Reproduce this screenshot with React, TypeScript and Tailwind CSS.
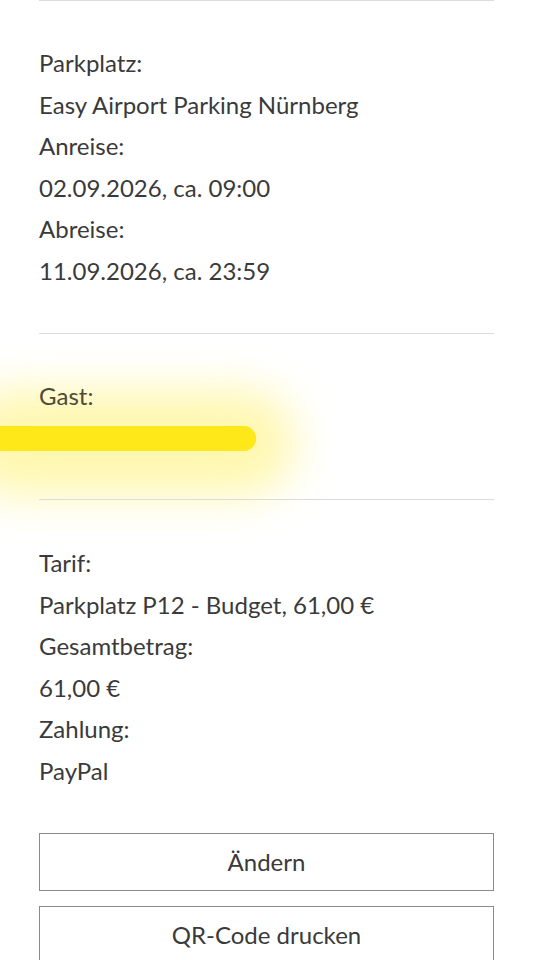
import React from "react";

const Line = ({ children }: { children: React.ReactNode }) => (
  <div className="h-[41.5px] leading-[41.5px]">{children}</div>
);

export default function App() {
  return (
    <div
      className="w-[533px] h-[960px] overflow-hidden bg-white text-[#3a3a3a] text-[24px] relative"
      style={{ fontFamily: "Lato, 'Liberation Sans', sans-serif" }}
    >
      <div className="absolute left-[-40px] top-[390px] w-[335px] h-[105px] rounded-full bg-[#fff59a] opacity-80 blur-[22px] pointer-events-none" />
      <div className="absolute left-0 top-[426px] w-[256px] h-[25px] rounded-r-full bg-[#ffe81a] blur-[0.5px] pointer-events-none" />
      <div className="mx-[39px] w-[455px] relative">
        <div className="border-t border-[#dcdcdc] pt-[41px] pb-[42px]">
          <Line>Parkplatz:</Line>
          <Line>Easy Airport Parking Nürnberg</Line>
          <Line>Anreise:</Line>
          <Line>02.09.2026, ca. 09:00</Line>
          <Line>Abreise:</Line>
          <Line>11.09.2026, ca. 23:59</Line>
        </div>
        <div className="border-t border-[#dcdcdc] pt-[41px] pb-[41px]">
          <Line>
            <span className="text-[#4e4b36]">Gast:</span>
          </Line>
          <Line>
            <span className="opacity-0">Name</span>
          </Line>
        </div>
        <div className="border-t border-[#dcdcdc] pt-[42px] pb-[42px]">
          <Line>Tarif:</Line>
          <Line>Parkplatz P12 - Budget, 61,00 €</Line>
          <Line>Gesamtbetrag:</Line>
          <Line>61,00 €</Line>
          <Line>Zahlung:</Line>
          <Line>PayPal</Line>
        </div>
        <div className="flex flex-col gap-[15px]">
          <button className="h-[58px] w-full border border-[#8a8a8a] bg-white text-[24px] text-[#3a3a3a]">
            Ändern
          </button>
          <button className="h-[58px] w-full border border-[#8a8a8a] bg-white text-[24px] text-[#3a3a3a]">
            QR-Code drucken
          </button>
        </div>
      </div>
      <div className="absolute left-0 top-[426px] w-[256px] h-[25px] rounded-r-full bg-[#ffe81a] pointer-events-none" />
    </div>
  );
}
